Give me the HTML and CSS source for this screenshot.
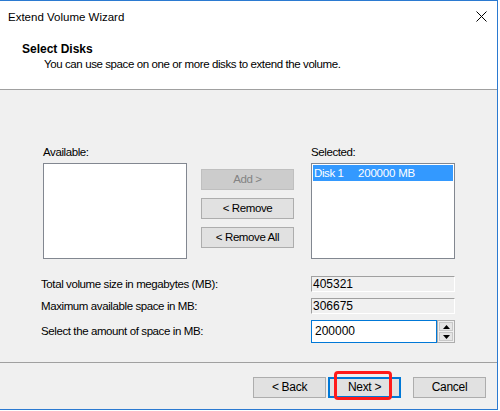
FILE: index.html
```html
<!DOCTYPE html>
<html>
<head>
<meta charset="utf-8">
<link rel="stylesheet" href="styles.css">
</head>
<body>
<div class="window">
  <div class="top">
    <div class="titlebar">
      <span class="title">Extend Volume Wizard</span>
      <svg class="close" width="11" height="11" viewBox="0 0 11 11"><path d="M0.5 0.5L10.5 10.5M10.5 0.5L0.5 10.5" stroke="#000" stroke-width="1" fill="none"/></svg>
    </div>
    <div class="header">
      <div class="h1">Select Disks</div>
      <div class="h2">You can use space on one or more disks to extend the volume.</div>
    </div>
  </div>
  <div class="body">
    <div class="lists">
      <div class="col">
        <div class="label">Available:</div>
        <div class="listbox"></div>
      </div>
      <div class="btns">
        <div class="btn disabled">Add &gt;</div>
        <div class="btn">&lt; Remove</div>
        <div class="btn">&lt; Remove All</div>
      </div>
      <div class="col">
        <div class="label">Selected:</div>
        <div class="listbox">
          <div class="item"><span class="disk">Disk 1</span><span class="size">200000 MB</span></div>
        </div>
      </div>
    </div>
    <div class="fields">
      <div class="flabel">Total volume size in megabytes (MB):</div>
      <div class="ro">405321</div>
      <div class="flabel">Maximum available space in MB:</div>
      <div class="ro">306675</div>
      <div class="flabel">Select the amount of space in MB:</div>
      <div class="spin">
        <div class="input">200000</div>
        <div class="arrows">
          <div class="arr"><svg width="7" height="4" viewBox="0 0 7 4"><path d="M3.5 0L7 4H0Z" fill="#000"/></svg></div>
          <div class="arr"><svg width="7" height="4" viewBox="0 0 7 4"><path d="M0 0H7L3.5 4Z" fill="#000"/></svg></div>
        </div>
      </div>
    </div>
  </div>
  <div class="footer">
    <div class="btn fbtn">&lt; Back</div>
    <div class="nextwrap">
      <div class="btn fbtn next">Next &gt;</div>
      <div class="mark"></div>
    </div>
    <div class="btn fbtn cancel">Cancel</div>
  </div>
</div>
</body>
</html>
```

FILE: styles.css
```css
html, body {
  margin: 0;
  padding: 0;
  background: #ffffff;
}
body {
  font-family: "Liberation Sans", Arial, sans-serif;
  font-size: 11.5px;
  letter-spacing: -0.4px;
  color: #000;
}
.window {
  width: 497px;
  height: 408px;
  border-top: 1px solid #2b7ad1;
  border-right: 1px solid #2b7ad1;
  border-bottom: 1px solid #2b7ad1;
  display: flex;
  flex-direction: column;
  background: #f0f0f0;
}
.top {
  background: #fff;
  height: 88px;
  border-bottom: 1px solid #a0a0a0;
}
.titlebar {
  height: 30px;
  display: flex;
  align-items: center;
  justify-content: space-between;
  padding-left: 8px;
  padding-right: 10px;
}
.title {
  font-size: 11.5px;
  letter-spacing: 0;
  line-height: 30px;
  padding-top: 1px;
}
.close {
  display: block;
  margin-top: 1px;
}
.header {
  padding-top: 11px;
}
.h1 {
  font-weight: bold;
  font-size: 12px;
  letter-spacing: 0;
  line-height: 15px;
  padding-left: 22px;
}
.h2 {
  line-height: 15px;
  padding-left: 44px;
}
.body {
  height: 272px;
  border-bottom: 1px solid #a0a0a0;
}
.lists {
  display: flex;
  padding-left: 43px;
  padding-top: 55px;
}
.col {
  width: 144px;
}
.label {
  line-height: 15px;
  height: 15px;
  margin-bottom: 3px;
}
.listbox {
  box-sizing: border-box;
  height: 96px;
  border: 1px solid #828790;
  background: #fff;
  padding: 1px;
}
.item {
  height: 16px;
  line-height: 16px;
  background: #3399ff;
  color: #fff;
  display: flex;
  padding-left: 1px;
}
.disk {
  width: 44px;
}
.size {
  font-size: 11.5px;
  letter-spacing: -0.2px;
}
.btns {
  width: 93px;
  margin-left: 14px;
  margin-right: 17px;
  padding-top: 24px;
  display: flex;
  flex-direction: column;
  gap: 8px;
}
.btn {
  box-sizing: border-box;
  height: 21px;
  line-height: 19px;
  text-align: center;
  background: #e1e1e1;
  border: 1px solid #adadad;
}
.btn.disabled {
  background: #cccccc;
  border-color: #bfbfbf;
  color: #838383;
}
.fields {
  display: grid;
  grid-template-columns: 270px 144px;
  grid-template-rows: 16px 16px 23px;
  row-gap: 6px;
  align-items: center;
  margin-left: 41px;
  margin-top: 17px;
}
.flabel {
  line-height: 15px;
}
.ro {
  box-sizing: border-box;
  height: 16px;
  line-height: 14px;
  font-size: 12px;
  letter-spacing: 0;
  border-top: 1px solid #a0a0a0;
  border-left: 1px solid #a0a0a0;
  border-right: 1px solid #fff;
  border-bottom: 1px solid #fff;
  padding-left: 1px;
  width: 144px;
}
.spin {
  display: flex;
  height: 23px;
  width: 144px;
}
.input {
  box-sizing: border-box;
  width: 126px;
  height: 23px;
  border: 1px solid #0078d7;
  background: #fff;
  line-height: 21px;
  padding-left: 3px;
  font-size: 12px;
  letter-spacing: 0;
}
.arrows {
  box-sizing: border-box;
  width: 18px;
  height: 23px;
  border: 1px solid #adadad;
  display: flex;
  flex-direction: column;
  gap: 1px;
  padding: 1px;
  background: #f0f0f0;
}
.arr {
  flex: 1;
  background: #e5e5e5;
  border: 1px solid #c8c8c8;
  display: flex;
  align-items: center;
  justify-content: center;
}
.arr svg { display: block; }
.footer {
  display: flex;
  padding-left: 253px;
  padding-top: 14px;
  align-items: flex-start;
}
.fbtn {
  width: 73px;
  font-size: 12px;
  letter-spacing: -0.3px;
}
.nextwrap {
  position: relative;
  margin-left: 2px;
}
.next {
  border: 2px solid #0078d7;
  line-height: 17px;
}
.mark {
  position: absolute;
  left: 6px;
  top: -6px;
  width: 58px;
  height: 29px;
  box-sizing: border-box;
  border: 3px solid #ff1a1a;
  border-radius: 4px;
}
.cancel {
  margin-left: 12px;
}
```
